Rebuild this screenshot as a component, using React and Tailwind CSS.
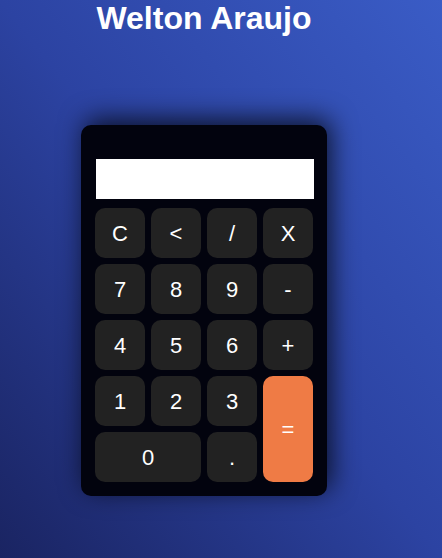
const KEYS = [
  { label: "C" },
  { label: "<" },
  { label: "/" },
  { label: "X" },
  { label: "7" },
  { label: "8" },
  { label: "9" },
  { label: "-" },
  { label: "4" },
  { label: "5" },
  { label: "6" },
  { label: "+" },
  { label: "1" },
  { label: "2" },
  { label: "3" },
  { label: "=", span: "row-span-2", accent: true },
  { label: "0", span: "col-span-2" },
  { label: "." },
];

export default function App() {
  return (
    <div
      className="min-h-[558px] w-full bg-gradient-to-tr from-[#1a2462] via-[#2c43a2] to-[#3a5cc6]"
      style={{ fontFamily: '"Liberation Sans", Arial, sans-serif' }}
    >
      <div className="w-[408px] flex flex-col items-center">
        <h1 className="text-[32px] leading-[36px] font-bold text-white">Welton Araujo</h1>

        {/* Calculadora */}
        <div className="mt-[89px] w-[246px] rounded-[10px] bg-[#02030e] px-[14px] pt-[34px] pb-[14px] shadow-[4px_-6px_26px_rgba(0,0,0,0.75)]">
          <div className="h-[40px] w-[218px] bg-white ml-px" />
          <div className="mt-[9px] grid grid-cols-[repeat(4,50px)] auto-rows-[50px] gap-[6px]">
            {KEYS.map((k) => (
              <button
                key={k.label}
                className={`${k.span || ""} ${
                  k.accent ? "bg-[#ef7b45]" : "bg-[#222222]"
                } rounded-[10px] text-white text-[22px] flex items-center justify-center`}
              >
                {k.label}
              </button>
            ))}
          </div>
        </div>
      </div>
    </div>
  );
}
